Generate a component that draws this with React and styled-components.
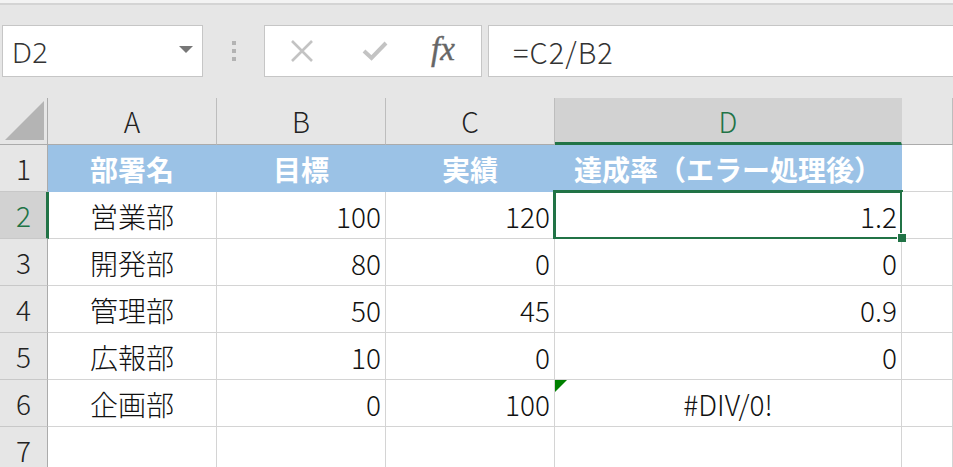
import React from "react";
import styled, { createGlobalStyle, css } from "styled-components";

const GlobalStyle = createGlobalStyle`
  html, body {
    margin: 0;
    padding: 0;
    background: #e6e6e6;
    overflow: hidden;
  }
  body {
    font-family: "Noto Sans CJK JP", "Noto Sans", sans-serif;
    color: #1f1f1f;
  }
`;

const GREEN = "#217346";

const rows = [
  ["部署名", "目標", "実績", "達成率（エラー処理後）"],
  ["営業部", "100", "120", "1.2"],
  ["開発部", "80", "0", "0"],
  ["管理部", "50", "45", "0.9"],
  ["広報部", "10", "0", "0"],
  ["企画部", "0", "100", "#DIV/0!"],
  ["", "", "", ""],
];

function App() {
  return (
    <Page>
      <GlobalStyle />
      <TopStrip />
      <FormulaBar>
        <NameBox>
          <span>D2</span>
          <Caret />
        </NameBox>
        <Grip>
          <i />
          <i />
          <i />
        </Grip>
        <IconBox>
          <svg width="24" height="22" viewBox="0 0 24 22">
            <path d="M2 1 L22 21 M22 1 L2 21" stroke="#c3c3c3" strokeWidth="2.6" fill="none" />
          </svg>
          <svg width="26" height="20" viewBox="0 0 26 20">
            <path d="M2 10 L9.5 17 L24 2" stroke="#c3c3c3" strokeWidth="4" fill="none" />
          </svg>
          <Fx>fx</Fx>
        </IconBox>
        <FormulaInput>=C2/B2</FormulaInput>
      </FormulaBar>

      <Sheet>
        <Corner>
          <svg width="40" height="40" viewBox="0 0 40 40">
            <polygon points="39,0 39,39 0,39" fill="#b4b4b4" />
          </svg>
        </Corner>
        {["A", "B", "C", "D", ""].map((c) => (
          <ColHead key={c || "E"} $active={c === "D"}>
            {c}
          </ColHead>
        ))}

        {rows.map((r, i) => {
          const n = i + 1;
          const head = i === 0;
          return (
            <React.Fragment key={n}>
              <RowHead $active={n === 2}>{n}</RowHead>
              <Cell $head={head} $align="center">
                {r[0]}
              </Cell>
              <Cell $head={head} $align={head ? "center" : "right"}>
                {r[1]}
              </Cell>
              <Cell $head={head} $align={head ? "center" : "right"}>
                {r[2]}
              </Cell>
              <Cell
                $head={head}
                $align={head || r[3].startsWith("#") ? "center" : "right"}
                $selected={n === 2}
                $error={n === 6}
              >
                {r[3]}
                {n === 2 && <Handle />}
              </Cell>
              <Cell />
            </React.Fragment>
          );
        })}
      </Sheet>
    </Page>
  );
}

export default App;

const Page = styled.div`
  width: 953px;
  height: 467px;
  overflow: hidden;
`;

const TopStrip = styled.div`
  height: 3px;
  background: #f3f3f3;
  border-bottom: 2px solid #d4d4d4;
`;

const FormulaBar = styled.div`
  display: flex;
  align-items: flex-start;
  height: 93px;
  padding: 20px 0 0 2px;
  box-sizing: border-box;
`;

const boxStyle = css`
  height: 52px;
  box-sizing: border-box;
  background: #fff;
  border: 1px solid #c6c6c6;
`;

const NameBox = styled.div`
  ${boxStyle}
  width: 201px;
  display: flex;
  align-items: center;
  justify-content: space-between;
  padding: 0 9px 0 9px;
  font-family: "Noto Sans", "Open Sans", sans-serif;
  font-weight: 300;
  font-size: 28px;
  color: #333;

  span {
    margin-top: 2px;
  }
`;

const Caret = styled.div`
  width: 0;
  height: 0;
  border-left: 7px solid transparent;
  border-right: 7px solid transparent;
  border-top: 7px solid #777;
  margin-top: -4px;
`;

const Grip = styled.div`
  width: 61px;
  height: 52px;
  display: flex;
  flex-direction: column;
  align-items: center;
  justify-content: center;
  gap: 4px;

  i {
    width: 4px;
    height: 4px;
    background: #b3b3b3;
  }
`;

const IconBox = styled.div`
  ${boxStyle}
  width: 218px;
  display: flex;
  align-items: center;
  padding: 0 0 0 25px;
  gap: 46px;

  svg:nth-child(2) {
    margin-left: 2px;
  }
`;

const Fx = styled.span`
  font-family: "Liberation Serif", "DejaVu Serif", serif;
  font-style: italic;
  font-size: 33px;
  color: #666;
  margin-left: -3px;
  margin-top: -4px;
  letter-spacing: 0;
  -webkit-text-stroke: 0.4px #666;
`;

const FormulaInput = styled.div`
  ${boxStyle}
  flex: 1;
  margin-left: 6px;
  margin-right: -10px;
  display: flex;
  align-items: center;
  padding-left: 24px;
  font-size: 29px;
  font-weight: 300;
  color: #333;
  letter-spacing: 1px;
`;

const Sheet = styled.div`
  display: grid;
  grid-template-columns: 48px 169px 169px 169px 347px 1fr;
  grid-auto-rows: 47px;
  font-size: 28px;
  font-weight: 300;
  line-height: 1;
`;

const Corner = styled.div`
  background: #e6e6e6;
  border-right: 1px solid #ababab;
  border-bottom: 1px solid #ababab;
  box-sizing: border-box;
  display: flex;
  align-items: flex-end;
  justify-content: flex-end;
  padding: 0 2px 3px 0;
`;

const ColHead = styled.div`
  box-sizing: border-box;
  background: ${(p) => (p.$active ? "#d2d2d2" : "#e6e6e6")};
  color: ${(p) => (p.$active ? GREEN : "#222")};
  border-right: 1px solid ${(p) => (p.$active ? "#d2d2d2" : "#bdbdbd")};
  border-bottom: ${(p) => (p.$active ? `3px solid ${GREEN}` : "1px solid #ababab")};
  display: flex;
  align-items: center;
  justify-content: center;
  padding-top: ${(p) => (p.$active ? "2px" : "0")};
`;

const RowHead = styled.div`
  box-sizing: border-box;
  background: ${(p) => (p.$active ? "#d2d2d2" : "#e6e6e6")};
  color: ${(p) => (p.$active ? GREEN : "#222")};
  border-bottom: 1px solid #c8c8c8;
  border-right: ${(p) => (p.$active ? `3px solid ${GREEN}` : "1px solid #ababab")};
  margin-right: ${(p) => (p.$active ? "-1px" : "0")};
  position: relative;
  z-index: 1;
  display: flex;
  align-items: center;
  justify-content: center;
  padding-left: ${(p) => (p.$active ? "1px" : "0")};
`;

const Cell = styled.div`
  position: relative;
  box-sizing: border-box;
  background: ${(p) => (p.$head ? "#9bc2e6" : "#fff")};
  color: ${(p) => (p.$head ? "#fff" : "#111")};
  font-weight: ${(p) => (p.$head ? 700 : 300)};
  border-right: 1px solid ${(p) => (p.$head ? "#9bc2e6" : "#d4d4d4")};
  border-bottom: 1px solid ${(p) => (p.$head ? "#9bc2e6" : "#d4d4d4")};
  display: flex;
  align-items: center;
  justify-content: ${(p) =>
    p.$align === "center" ? "center" : p.$align === "right" ? "flex-end" : "flex-start"};
  padding: 2px 4px 0 4px;
  white-space: nowrap;

  ${(p) =>
    p.$selected &&
    css`
      &::after {
        content: "";
        position: absolute;
        top: -2px;
        left: -2px;
        right: -2px;
        bottom: -2px;
        border: 3px solid ${GREEN};
        pointer-events: none;
      }
    `}

  ${(p) =>
    p.$error &&
    css`
      &::before {
        content: "";
        position: absolute;
        top: 0;
        left: 0;
        width: 0;
        height: 0;
        border-top: 12px solid #008000;
        border-right: 12px solid transparent;
      }
    `}
`;

const Handle = styled.div`
  position: absolute;
  right: -5px;
  bottom: -4px;
  width: 8px;
  height: 8px;
  background: ${GREEN};
  border-left: 1px solid #fff;
  border-top: 1px solid #fff;
  z-index: 2;
`;
